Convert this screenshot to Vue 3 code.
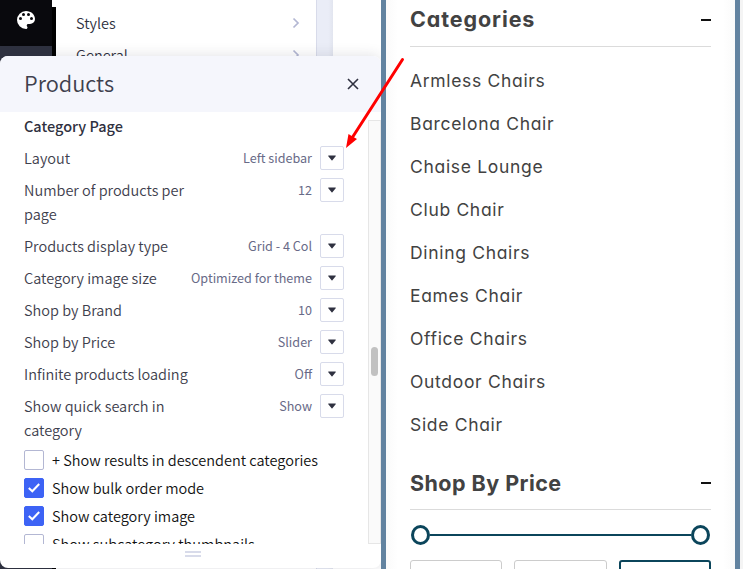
<script setup>
const menu = ['Styles', 'General']

const settings = [
  { label: 'Layout', value: 'Left sidebar' },
  { label: 'Number of products per page', value: '12' },
  { label: 'Products display type', value: 'Grid - 4 Col' },
  { label: 'Category image size', value: 'Optimized for theme' },
  { label: 'Shop by Brand', value: '10' },
  { label: 'Shop by Price', value: 'Slider' },
  { label: 'Infinite products loading', value: 'Off' },
  { label: 'Show quick search in category', value: 'Show' },
]

const toggles = [
  { label: '+ Show results in descendent categories', on: false },
  { label: 'Show bulk order mode', on: true },
  { label: 'Show category image', on: true },
  { label: 'Show subcategory thumbnails', on: false },
]

const categories = [
  'Armless Chairs',
  'Barcelona Chair',
  'Chaise Lounge',
  'Club Chair',
  'Dining Chairs',
  'Eames Chair',
  'Office Chairs',
  'Outdoor Chairs',
  'Side Chair',
]
</script>

<template>
  <div class="screen">
    <div class="editor">
      <div class="backdrop">
        <div class="rail">
          <div class="rail-tab">
            <svg width="24" height="24" viewBox="0 0 24 24">
              <path
                fill="#fff"
                d="M12 3a9 9 0 0 0 0 18c.83 0 1.5-.67 1.5-1.5 0-.39-.15-.74-.39-1.01-.23-.26-.38-.61-.38-.99 0-.83.67-1.5 1.5-1.5H16a5 5 0 0 0 5-5c0-4.42-4.03-8-9-8zm-5.500 9a1.500 1.500 0 1 1 0-3 1.500 1.500 0 0 1 0 3zm3-4a1.500 1.500 0 1 1 0-3 1.500 1.500 0 0 1 0 3zm5 0a1.500 1.500 0 1 1 0-3 1.500 1.500 0 0 1 0 3zm3 4a1.500 1.500 0 1 1 0-3 1.500 1.500 0 0 1 0 3z"
              />
            </svg>
          </div>
        </div>
        <div class="rail-shadow"></div>
        <nav class="menu">
          <div v-for="item in menu" :key="item" class="menu-item">
            <span>{{ item }}</span>
            <svg width="8" height="12" viewBox="0 0 8 12">
              <path d="M1.500 1.500 6 6 1.500 10.500" fill="none" stroke="#b3b7d3" stroke-width="1.700" />
            </svg>
          </div>
        </nav>
        <div class="gutter"></div>
        <div class="page-edge"></div>
      </div>

      <section class="panel">
        <header class="panel-head">
          <h1>Products</h1>
          <svg class="close" width="12" height="12" viewBox="0 0 12 12">
            <path d="M1 1 11 11M11 1 1 11" stroke="#2f3140" stroke-width="1.600" />
          </svg>
        </header>
        <div class="panel-body">
          <div class="fields">
            <h2>Category Page</h2>
            <div v-for="s in settings" :key="s.label" class="setting">
              <span class="setting-label">{{ s.label }}</span>
              <span class="setting-value">{{ s.value }}</span>
              <span class="dropdown">
                <svg width="8" height="6" viewBox="0 0 8 6">
                  <path d="M.6.5h6.800a.4.4 0 0 1 .3.700L4.400 5.200a.5.500 0 0 1-.8 0L.3 1.200A.4.400 0 0 1 .6.5z" fill="#2f3140" />
                </svg>
              </span>
            </div>
            <div v-for="t in toggles" :key="t.label" class="toggle">
              <span class="box" :class="{ on: t.on }">
                <svg v-if="t.on" width="14" height="12" viewBox="0 0 14 12">
                  <path d="M1.800 6 5.300 9.300 12.200 2" fill="none" stroke="#fff" stroke-width="2" />
                </svg>
              </span>
              <span>{{ t.label }}</span>
            </div>
          </div>
          <div class="track"><div class="thumb"></div></div>
        </div>
        <footer class="grip"><i></i><i></i></footer>
      </section>
    </div>

    <aside class="store">
      <div class="store-head first">
        <h3>Categories</h3>
        <span class="minus"></span>
      </div>
      <ul>
        <li v-for="c in categories" :key="c">{{ c }}</li>
      </ul>
      <div class="store-head second">
        <h3>Shop By Price</h3>
        <span class="minus"></span>
      </div>
      <div class="slider"><b></b><i></i><b></b></div>
      <div class="inputs">
        <span></span>
        <span></span>
        <span class="go"></span>
      </div>
    </aside>
    <div class="outside"></div>

    <svg class="arrow" width="743" height="569" viewBox="0 0 743 569">
      <path d="M402.500 59.500 352 138" stroke="#f00" stroke-width="3" stroke-linecap="round" />
      <path d="M346 148 348.500 134 352.500 136.500 357 139z" fill="#f00" />
    </svg>
  </div>
</template>

<style>
body {
  overflow: hidden;
}
</style>

<style scoped>
.screen {
  position: relative;
  display: grid;
  grid-template-columns: 381px 359px 3px;
  width: 743px;
  height: 569px;
  overflow: hidden;
  background: #fff;
  font-family: 'Noto Sans CJK SC', 'Open Sans', sans-serif;
  color: #3e404d;
}
h1, h2, h3, ul {
  margin: 0;
  padding: 0;
}
.editor {
  position: relative;
  overflow: hidden;
}
.backdrop {
  display: flex;
  height: 569px;
}
.rail {
  width: 52px;
  background: #2f3240;
}
.rail-tab {
  display: flex;
  justify-content: center;
  height: 38px;
  padding-top: 8px;
  background: #09090d;
}
.rail-shadow {
  width: 4px;
  margin-top: 7px;
  background: #000;
}
.menu {
  width: 260px;
  box-sizing: border-box;
  padding: 7px 16px 0 20px;
  flex: 1;
}
.menu-item {
  display: flex;
  align-items: center;
  justify-content: space-between;
  height: 32px;
  font-size: 14.500px;
  font-weight: 350;
  color: #2f3140;
}
.menu-item span {
  padding-bottom: 2px;
}
.gutter {
  width: 16px;
  border-left: 1px solid #d8dbea;
  background: linear-gradient(90deg, #eaedf7 70%, #e2e5ef);
}
.page-edge {
  width: 48px;
  background: #fff;
}
.panel {
  position: absolute;
  left: 0;
  top: 56px;
  display: flex;
  flex-direction: column;
  width: 381px;
  height: 512px;
  border-radius: 8px;
  overflow: hidden;
  background: #fff;
  box-shadow: 0 0 14px rgba(40, 42, 60, 0.15);
}
.panel-head {
  display: flex;
  align-items: center;
  justify-content: space-between;
  height: 56px;
  box-sizing: border-box;
  padding: 0 22px 0 24px;
  background: #f5f6fc;
}
.panel-head h1 {
  padding-bottom: 2px;
  font-size: 21.800px;
  font-weight: 350;
  line-height: 32px;
}
.panel-body {
  display: flex;
  height: 432px;
  overflow: hidden;
}
.fields {
  width: 344px;
  box-sizing: border-box;
  padding: 2px 0 0 24px;
}
.fields h2 {
  height: 24px;
  margin-bottom: 8px;
  font-size: 14.500px;
  line-height: 24px;
  font-weight: 500;
  color: #2f3140;
}
.setting {
  display: grid;
  grid-template-columns: 166px 130px 24px;
  margin-bottom: 8px;
  line-height: 24px;
}
.setting-label {
  font-size: 14.500px;
  font-weight: 350;
}
.setting-value {
  padding-right: 8px;
  text-align: right;
  white-space: nowrap;
  font-size: 12.600px;
  font-weight: 400;
  color: #686a87;
}
.dropdown {
  display: flex;
  align-items: center;
  justify-content: center;
  width: 24px;
  height: 24px;
  box-sizing: border-box;
  border: 1px solid #d8dbea;
  border-radius: 2px;
}
.toggle {
  display: flex;
  align-items: center;
  gap: 8px;
  height: 20px;
  margin-bottom: 8px;
  white-space: nowrap;
  font-size: 14.500px;
  font-weight: 350;
  line-height: 20px;
  color: #111;
}
.box {
  display: flex;
  align-items: center;
  justify-content: center;
  width: 20px;
  height: 20px;
  box-sizing: border-box;
  border: 1px solid #b3b7d3;
  border-radius: 2px;
}
.box.on {
  border-color: #3d63f5;
  background: #3d63f5;
}
.track {
  width: 13px;
  box-sizing: border-box;
  margin: 8px 0 0 24px;
  padding: 226px 0 0 2px;
  border: 1px solid #e6e6e6;
  background: #fafafa;
}
.thumb {
  width: 7px;
  height: 29px;
  border-radius: 4px;
  background: #c1c1c1;
}
.grip {
  display: flex;
  flex-direction: column;
  align-items: center;
  gap: 2px;
  padding: 7px 0 0 5px;
}
.grip i {
  width: 16px;
  height: 2px;
  background: #d8dbea;
}
.store {
  box-sizing: border-box;
  border: solid #6283a0;
  border-width: 0 5px;
  padding: 0 24px;
  background: linear-gradient(90deg, #fafafa, #fff 12px, #fff 337px, #fafafa);
  font-family: Inter, 'Open Sans', sans-serif;
  font-feature-settings: 'cv11' 1;
  color: #424242;
}
.store-head {
  display: flex;
  align-items: center;
  justify-content: space-between;
  box-sizing: border-box;
  border-bottom: 1px solid #dbdbdb;
}
.store-head h3 {
  font-size: 21.500px;
  font-weight: 700;
  line-height: 30px;
}
.first {
  height: 47px;
  padding-bottom: 7px;
}
.first h3 {
  padding-bottom: 2px;
  letter-spacing: 0.900px;
}
.second {
  height: 64px;
  padding-top: 11px;
}
.second h3 {
  letter-spacing: 0.450px;
}
.minus {
  width: 10px;
  height: 2px;
  background: #111;
}
ul {
  list-style: none;
  padding-top: 12px;
}
li {
  height: 43px;
  line-height: 43px;
  font-size: 17.500px;
  font-weight: 400;
  letter-spacing: 0.680px;
  white-space: nowrap;
}
.slider {
  display: flex;
  align-items: center;
  height: 20px;
  padding: 0 1px;
  margin-top: 15px;
}
.slider b {
  width: 19px;
  height: 20px;
  box-sizing: border-box;
  border: 3px solid #0b455b;
  border-radius: 50%;
}
.slider i {
  flex: 1;
  height: 2px;
  background: #0b455b;
}
.inputs {
  display: grid;
  grid-template-columns: 92px 93px 92px;
  justify-content: space-between;
  margin-top: 15px;
}
.inputs span {
  height: 40px;
  box-sizing: border-box;
  border: 1px solid #ccc;
  border-radius: 3px;
}
.inputs .go {
  border: 2px solid #0b455b;
}
.outside {
  background: #f4f4f4;
}
.arrow {
  position: absolute;
  left: 0;
  top: 0;
}
</style>
